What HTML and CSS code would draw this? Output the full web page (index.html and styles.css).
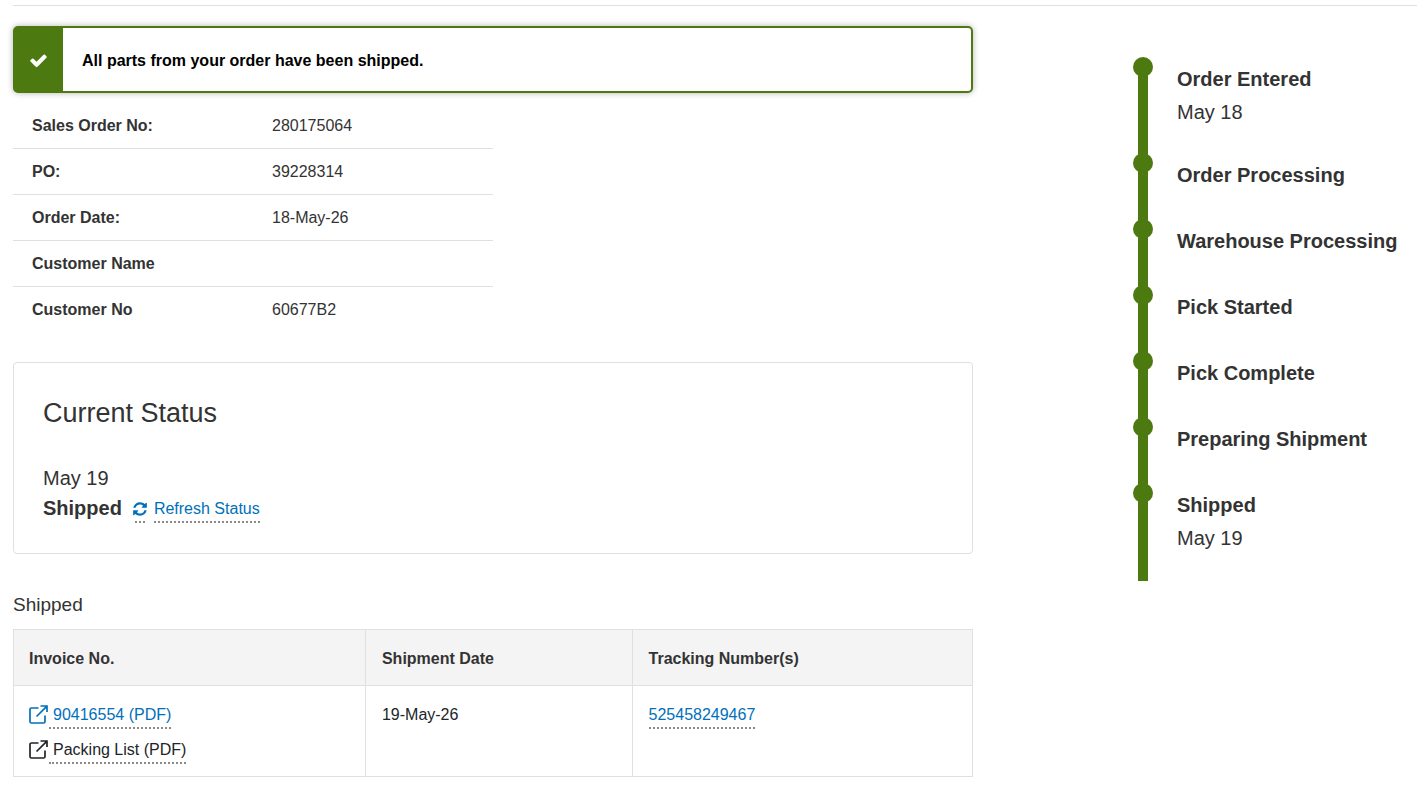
FILE: index.html
```html
<!DOCTYPE html>
<html lang="en">
<head>
<meta charset="utf-8">
<meta name="viewport" content="width=device-width, initial-scale=1">
<title>Order Status</title>
<link rel="stylesheet" href="styles.css">
</head>
<body>
<svg class="sprite" width="0" height="0" aria-hidden="true">
  <symbol id="external" viewBox="0 0 20 20">
    <path d="M9.500 3H2.500A1.500 1.500 0 0 0 1 4.500V16.500A1.500 1.500 0 0 0 2.500 18H14.500A1.500 1.500 0 0 0 16 16.500V10.500M11.500 1H18V7M17.700 1.300L7.500 11.500" fill="none" stroke="currentColor" stroke-width="1.700"/>
  </symbol>
</svg>
<div class="page">
  <main class="order">
    <div class="alert" role="status">
      <div class="alert-icon">
        <svg width="19" height="19" viewBox="0 0 1792 1792" aria-hidden="true"><path fill="currentColor" d="M1671 566q0 40-28 68l-724 724-136 136q-28 28-68 28t-68-28l-136-136-362-362q-28-28-28-68t28-68l136-136q28-28 68-28t68 28l294 295 656-657q28-28 68-28t68 28l136 136q28 28 28 68z"/></svg>
      </div>
      <p class="alert-text">All parts from your order have been shipped.</p>
    </div>

    <dl class="details">
      <div class="detail"><dt>Sales Order No:</dt><dd>280175064</dd></div>
      <div class="detail"><dt>PO:</dt><dd>39228314</dd></div>
      <div class="detail"><dt>Order Date:</dt><dd>18-May-26</dd></div>
      <div class="detail"><dt>Customer Name</dt><dd></dd></div>
      <div class="detail"><dt>Customer No</dt><dd>60677B2</dd></div>
    </dl>

    <section class="status">
      <h2 class="status-title">Current Status</h2>
      <p class="status-date">May 19</p>
      <div class="status-line">
        <strong>Shipped</strong>
        <a class="refresh" href="#">
          <span class="refresh-icon"><svg width="16" height="16" viewBox="0 0 1792 1792" aria-hidden="true"><path fill="currentColor" d="M1639 1056q0 5-1 7-64 268-268 434.500t-478 166.500q-146 0-282.500-55t-243.500-157l-129 129q-19 19-45 19t-45-19-19-45v-448q0-26 19-45t45-19h448q26 0 45 19t19 45-19 45l-137 137q71 66 161 102t187 36q134 0 250-65t186-179q11-17 53-117 8-23 30-23h192q13 0 22.500 9.500t9.500 22.500zm25-800v448q0 26-19 45t-45 19h-448q-26 0-45-19t-19-45 19-45l138-138q-148-137-349-137-134 0-250 65t-186 179q-11 17-53 117-8 23-30 23h-199q-13 0-22.500-9.500t-9.500-22.500v-7q65-268 270-434.500t480-166.500q146 0 284 55.500t245 156.500l130-129q19-19 45-19t45 19 19 45z"/></svg></span>
          <span class="dotted">Refresh Status</span>
        </a>
      </div>
    </section>

    <h3 class="shipments-title">Shipped</h3>
    <table class="shipments">
      <thead>
        <tr><th class="col-invoice" scope="col">Invoice No.</th><th class="col-date" scope="col">Shipment Date</th><th scope="col">Tracking Number(s)</th></tr>
      </thead>
      <tbody>
        <tr>
          <td>
            <div class="files">
              <a class="file" href="#"><svg width="20" height="20" aria-hidden="true"><use href="#external"/></svg><span class="dotted file-name">90416554 (PDF)</span></a>
              <a class="file file-dark" href="#"><svg width="20" height="20" aria-hidden="true"><use href="#external"/></svg><span class="dotted file-name">Packing List (PDF)</span></a>
            </div>
          </td>
          <td>19-May-26</td>
          <td><a class="dotted" href="#">525458249467</a></td>
        </tr>
      </tbody>
    </table>
  </main>

  <aside class="progress" aria-label="Order progress">
    <ol class="steps">
      <li class="step"><span class="rail"></span><div class="step-body"><strong>Order Entered</strong><span class="step-date">May 18</span></div></li>
      <li class="step"><span class="rail"></span><div class="step-body"><strong>Order Processing</strong></div></li>
      <li class="step"><span class="rail"></span><div class="step-body"><strong>Warehouse Processing</strong></div></li>
      <li class="step"><span class="rail"></span><div class="step-body"><strong>Pick Started</strong></div></li>
      <li class="step"><span class="rail"></span><div class="step-body"><strong>Pick Complete</strong></div></li>
      <li class="step"><span class="rail"></span><div class="step-body"><strong>Preparing Shipment</strong></div></li>
      <li class="step"><span class="rail"></span><div class="step-body"><strong>Shipped</strong><span class="step-date">May 19</span></div></li>
    </ol>
  </aside>
</div>
</body>
</html>
```

FILE: styles.css
```css
:root {
  --green: #4d7a10;
  --blue: #0070bb;
  --text: #333;
  --line: #dee0e3;
}

* {
  box-sizing: border-box;
}

body {
  margin: 0;
  padding: 5px 0 24px 13px;
  background: #fff;
  color: var(--text);
  font: 16px/24px "Liberation Sans", Arial, sans-serif;
}

p, h2, h3, dl, dd, ol {
  margin: 0;
  padding: 0;
}

a {
  color: var(--blue);
  text-decoration: none;
}

svg {
  display: block;
}

.sprite {
  position: absolute;
}

.page {
  display: grid;
  grid-template-columns: minmax(0, 1fr) 284px;
  column-gap: 160px;
  align-items: start;
  border-top: 1px solid #e0e0e0;
  padding-top: 20px;
}

/* Alert */
.alert {
  display: flex;
  border: 2px solid var(--green);
  border-radius: 5px;
  background: var(--green);
  box-shadow: 0 0 6px rgba(0, 0, 0, 0.3);
}

.alert-icon {
  display: flex;
  flex: none;
  align-items: center;
  justify-content: center;
  width: 48px;
  padding: 2px 1px 0 0;
  color: #fff;
}

.alert-text {
  flex: 1;
  padding: 21px 19px 18px;
  border-radius: 0 3px 3px 0;
  background: #fff;
  color: #000;
  font-weight: 700;
}

/* Order details */
.details {
  width: 50%;
  margin-top: 10px;
}

.detail {
  display: grid;
  grid-template-columns: 1fr 1fr;
  min-height: 46px;
  padding: 11px 0 10px;
  border-bottom: 1px solid var(--line);
}

.detail:last-child {
  border-bottom: 0;
}

.detail dt {
  padding-left: 19px;
  font-weight: 700;
}

.detail dd {
  padding-left: 19px;
}

/* Current status */
.status {
  margin-top: 29px;
  padding: 30px 29px;
  border: 1px solid var(--line);
  border-radius: 4px;
}

.status-title {
  margin-bottom: 30px;
  font-size: 27px;
  font-weight: 400;
  line-height: 40px;
}

.status-date,
.status-line {
  font-size: 20px;
  line-height: 30px;
}

.status-line {
  display: flex;
  align-items: flex-end;
  gap: 10px;
  height: 30px;
}

.refresh {
  display: flex;
  gap: 6px;
  font-size: 16px;
  line-height: 24px;
}

.refresh-icon {
  display: flex;
  flex-direction: column;
  align-items: center;
  justify-content: space-between;
  height: 26px;
  padding-top: 4px;
}

.refresh-icon::after {
  width: 10px;
  border-bottom: 2px dotted #8a8a8a;
  content: "";
}

.dotted {
  display: inline-block;
  height: 26px;
  border-bottom: 2px dotted #8a8a8a;
}

/* Shipments */
.shipments-title {
  margin: 38px 0 11px;
  font-size: 19px;
  font-weight: 400;
  line-height: 26px;
}

.shipments {
  width: 100%;
  border-collapse: collapse;
  table-layout: fixed;
}

.shipments th,
.shipments td {
  padding: 17px 16px 14px;
  border: 1px solid var(--line);
  text-align: left;
  vertical-align: top;
}

.shipments th:first-child,
.shipments td:first-child {
  padding-left: 15px;
}

.shipments th {
  background: #f4f4f4;
}

.shipments td {
  padding-bottom: 12px;
  color: #212529;
}

.col-invoice {
  width: 36.7%;
}

.col-date {
  width: 27.8%;
}

.files {
  display: flex;
  flex-direction: column;
  align-items: flex-start;
  gap: 9px;
}

.file {
  display: flex;
}

.file svg {
  margin-top: 2px;
}

.file-dark {
  color: #212529;
}

.file-name {
  padding-left: 4px;
}

/* Progress timeline */
.progress {
  padding-top: 31px;
  font-size: 20px;
  line-height: 30px;
}

.steps {
  list-style: none;
}

.step {
  display: grid;
  grid-template-columns: 20px 1fr;
  column-gap: 24px;
  min-height: 66px;
}

.rail {
  position: relative;
  width: 10px;
  margin: 0 auto;
  background: var(--green);
}

.rail::before {
  position: absolute;
  top: 0;
  left: -5px;
  width: 20px;
  height: 20px;
  border-radius: 50%;
  background: var(--green);
  content: "";
}

.step:first-child .rail {
  margin-top: 10px;
}

.step:first-child .rail::before {
  top: -10px;
}

.step-body {
  display: flex;
  flex-direction: column;
  gap: 3px;
  padding: 7px 0 26px;
  white-space: nowrap;
}

.step:last-child .step-body {
  padding-bottom: 28px;
}
```
